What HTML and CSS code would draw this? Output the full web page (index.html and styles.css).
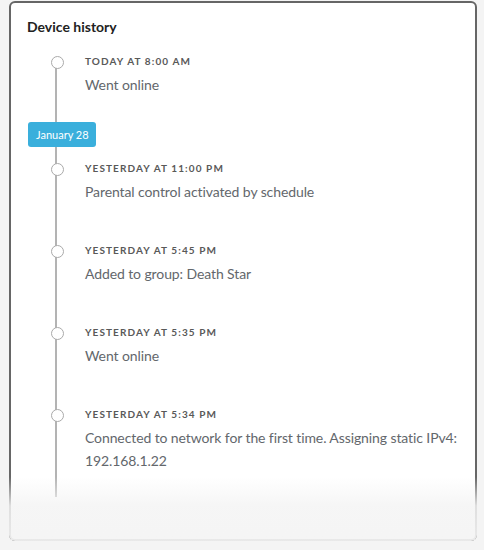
FILE: index.html
```html
<!DOCTYPE html>
<html lang="en">
<head>
  <meta charset="UTF-8">
  <meta name="viewport" content="width=device-width, initial-scale=1.0">
  <title>Device history</title>
  <link rel="stylesheet" href="styles.css">
</head>
<body>
  <div class="card">
    <h2 class="card-title">Device history</h2>
    <div class="timeline">
      <div class="event first">
        <div class="event-time">Today at 8:00 AM</div>
        <div class="event-text">Went online</div>
      </div>
      <div class="day-badge">January 28</div>
      <div class="event">
        <div class="event-time">Yesterday at 11:00 PM</div>
        <div class="event-text">Parental control activated by schedule</div>
      </div>
      <div class="event">
        <div class="event-time">Yesterday at 5:45 PM</div>
        <div class="event-text">Added to group: Death Star</div>
      </div>
      <div class="event">
        <div class="event-time">Yesterday at 5:35 PM</div>
        <div class="event-text">Went online</div>
      </div>
      <div class="event last">
        <div class="event-time">Yesterday at 5:34 PM</div>
        <div class="event-text">Connected to network for the first time. Assigning static IPv4: 192.168.1.22</div>
      </div>
    </div>
    <div class="card-fade"></div>
  </div>
</body>
</html>
```

FILE: styles.css
```css
/* Reset and Base Styles */
* {
  margin: 0;
  padding: 0;
  box-sizing: border-box;
}

body {
  font-family: 'Lato', 'Open Sans', sans-serif;
  background-color: #f4f4f4;
  color: #333;
  padding: 1px 7px 9px 9px;
}

/* Card */
.card {
  position: relative;
  height: 540px;
  background: #fff;
  border: 2px solid #666;
  border-radius: 6px;
  padding: 14px 8px 0 16px;
}

.card-title {
  font-size: 14px;
  font-weight: 700;
  line-height: 20px;
  color: #222;
}

/* Timeline */
.timeline {
  position: relative;
  display: flex;
  flex-direction: column;
  margin-top: 16px;
}

.timeline::before {
  content: "";
  position: absolute;
  left: 28px;
  top: 8px;
  bottom: 0;
  width: 2px;
  background: #b3b3b3;
}

.event {
  position: relative;
  padding: 0 0 39px 58px;
}

.event::before {
  content: "";
  position: absolute;
  left: 23.5px;
  top: 3px;
  width: 11px;
  height: 11px;
  border: 1.5px solid #aaa;
  border-radius: 50%;
  background: #fff;
}

.event.first {
  padding-bottom: 26px;
}

.event.last {
  padding-bottom: 25px;
}

.event-time {
  font-size: 10px;
  font-weight: 700;
  line-height: 16px;
  letter-spacing: 1.1px;
  text-transform: uppercase;
  color: #595959;
}

.event-text {
  margin-top: 4px;
  font-size: 14px;
  line-height: 23px;
  letter-spacing: -0.1px;
  color: #63676c;
}

.day-badge {
  position: relative;
  align-self: flex-start;
  margin: 0 0 13px 1px;
  padding: 0 7px 0 8px;
  height: 25px;
  line-height: 25px;
  font-size: 11px;
  color: #fff;
  background: #3aafdc;
  border-radius: 3px;
}

/* Bottom fade */
.card-fade {
  position: absolute;
  left: -2px;
  right: -2px;
  bottom: -2px;
  height: 64px;
  border-radius: 0 0 6px 6px;
  background: linear-gradient(to bottom, rgba(244, 244, 244, 0) 0%, rgba(244, 244, 244, 0.85) 45%, rgba(244, 244, 244, 0.92) 100%);
}
```
